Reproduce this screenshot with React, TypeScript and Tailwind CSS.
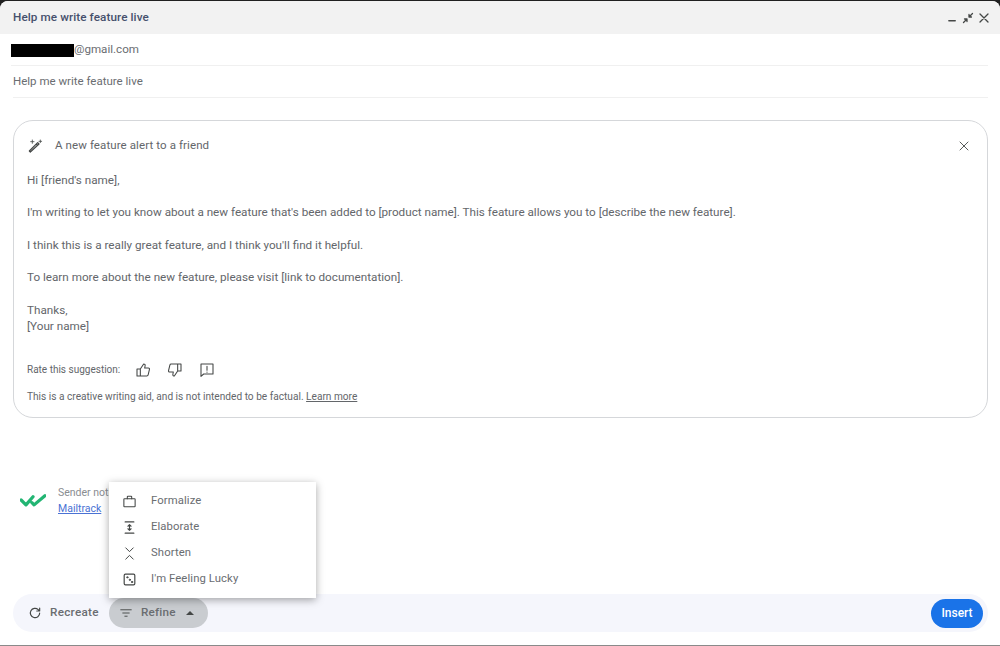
import React from 'react';

const Icon: React.FC<{ size?: number; width?: number; className?: string; children: React.ReactNode }> = ({
  size = 16,
  width = 1.3,
  className,
  children,
}) => (
  <svg
    width={size}
    height={size}
    viewBox="0 0 24 24"
    fill="none"
    stroke="currentColor"
    strokeWidth={width}
    strokeLinecap="round"
    strokeLinejoin="round"
    className={className}
  >
    {children}
  </svg>
);

const menuItems = [
  {
    label: 'Formalize',
    icon: (
      <>
        <rect x="3" y="7.5" width="18" height="13" rx="1" strokeWidth={1.7} />
        <path d="M8.5 7.5V4.500a1 1 0 0 1 1-1h5a1 1 0 0 1 1 1v3" strokeWidth={1.7} />
      </>
    ),
  },
  {
    label: 'Elaborate',
    icon: (
      <>
        <path d="M5 3h14M5 21h14" strokeWidth={1.8} />
        <path d="M12 7.5v9M9.5 10 12 7.5l2.5 2.500M9.5 14l2.5 2.5 2.5-2.5" strokeWidth={1.8} />
      </>
    ),
  },
  {
    label: 'Shorten',
    icon: <path d="M6 3l6 6 6-6M6 21l6-6 6 6" strokeWidth={1.6} />,
  },
  {
    label: "I'm Feeling Lucky",
    icon: (
      <>
        <rect x="3.5" y="3.5" width="17" height="17" rx="2" strokeWidth={1.9} />
        <circle cx="8.5" cy="8.5" r="1.1" fill="currentColor" />
        <circle cx="12.5" cy="12.5" r="1.1" fill="currentColor" />
        <circle cx="16" cy="16" r="1.1" fill="currentColor" />
      </>
    ),
  },
];

export default function App() {
  return (
    <div className="relative w-[1000px] h-[646px] overflow-hidden bg-[#202020] pt-px font-['Roboto',sans-serif] text-[#6a6d71]">
      <div className="flex flex-col h-[644px] bg-white rounded-t-lg overflow-hidden">
        <div className="flex items-center h-[33px] shrink-0 bg-[#f2f2f2] pl-[13px] pr-[10px]">
          <span className="text-[11.7px] font-medium text-[#46506c] tracking-[0.1px]">Help me write feature live</span>
          <div className="ml-auto flex items-center gap-[4px] text-[#444746]">
            <Icon size={11} width={3}>
              <path d="M4 19h14" />
            </Icon>
            <Icon size={12} width={2.6}>
              <path d="M21 3l-7 7M14 5v5h5M3 21l7-7M5 14h5v5" />
            </Icon>
            <Icon size={12} width={2.6}>
              <path d="M4 4l16 16M20 4L4 20" />
            </Icon>
          </div>
        </div>

        <div className="flex flex-col flex-1 pl-[13px] pr-[12px] min-h-0">
          <div className="flex items-center h-8 shrink-0 border-b border-[#f0f0f0] text-[11.6px] pt-px -ml-[2px]">
            <span className="w-[63px] h-[13px] bg-black" />
            <span>@gmail.com</span>
          </div>
          <div className="flex items-center h-8 shrink-0 border-b border-[#f0f0f0] text-[11.5px] pt-px">
            Help me write feature live
          </div>

          <div className="mt-[22px] h-[298px] shrink-0 flex flex-col rounded-[20px] border border-[#d5d7da] px-[13px] text-[#63666a]">
            <div className="flex items-center h-[49px] shrink-0 text-[11.5px]">
              <Icon size={16} width={1.8} className="text-[#444746]">
                <path d="M5 21l-1.500-1.500L16 7l2 2L5 21zM14 9l2 2" />
                <path d="M8 3v5M5.500 5.500h5M20 3v4M18 5h4" strokeWidth={1.2} />
              </Icon>
              <span className="ml-[12px] tracking-[0.1px]">A new feature alert to a friend</span>
              <Icon size={12} width={1.8} className="ml-auto mr-[4px] text-[#444746]">
                <path d="M4 4l16 16M20 4L4 20" />
              </Icon>
            </div>
            <div className="text-[11.7px] leading-[16.2px] pt-[2px]">
              <p>Hi [friend's name],</p>
              <p className="mt-[16.2px]">
                I'm writing to let you know about a new feature that's been added to [product name]. This feature allows
                you to [describe the new feature].
              </p>
              <p className="mt-[16.2px]">I think this is a really great feature, and I think you'll find it helpful.</p>
              <p className="mt-[16.2px]">To learn more about the new feature, please visit [link to documentation].</p>
              <p className="mt-[16.2px]">Thanks,</p>
              <p>[Your name]</p>
            </div>
            <div className="flex items-center mt-[26px] h-[20px] text-[10px]">
              <span>Rate this suggestion:</span>
              <div className="flex items-center gap-[16px] ml-[15px] text-[#444746]">
                <Icon size={16} width={1.6}>
                  <path d="M8 10.500V21H3V10.500h5zM8 10.500 13 3c1.500 0 2.500 1 2.200 2.600L14.500 9H20c1.200 0 2 1 1.700 2.200l-2 8.200c-.2 1-1 1.600-2 1.600H8" />
                </Icon>
                <Icon size={16} width={1.6}>
                  <path d="M16 13.500V3h5v10.500h-5zM16 13.500 11 21c-1.500 0-2.500-1-2.200-2.600l.7-3.400H4c-1.200 0-2-1-1.700-2.200l2-8.200C4.500 3.600 5.300 3 6.300 3H16" />
                </Icon>
                <Icon size={16} width={1.6}>
                  <path d="M3 3h18v15H7l-4 3.500V3z" />
                  <path d="M12 6.500v6M12 15v.2" />
                </Icon>
              </div>
            </div>
            <div className="mt-[9px] text-[10.15px]">
              This is a creative writing aid, and is not intended to be factual. <span className="underline">Learn more</span>
            </div>
          </div>

          <div className="flex items-start mt-[67px] pl-[7px]">
            <Icon size={26} width={3} className="mt-[2px] text-[#22b573]">
              <path d="M1 12l4.500 4.500L12 9M11 14.500l2 2L23 8" />
            </Icon>
            <div className="ml-[12px] text-[10.5px] leading-[16px] text-[#8a8d91]">
              <div>Sender notified by</div>
              <div className="text-[#4a72d4] underline">Mailtrack</div>
            </div>
          </div>

          <div className="mt-auto mb-[13px] flex items-center h-[38px] shrink-0 rounded-[19px] bg-[#f5f6fc] pl-[15px] pr-[5px]">
            <Icon size={14} width={2} className="text-[#444746]">
              <path d="M20 12a8 8 0 1 1-2.500-5.800L20 8.500M20 3.500v5h-5" />
            </Icon>
            <span className="ml-[8px] w-[51px] text-[11.7px] font-medium tracking-[0.3px]">Recreate</span>
            <div className="ml-[8px] flex items-center h-[30px] w-[99px] rounded-[15px] bg-[#c9ccd0] pl-[10px]">
              <Icon size={14} width={1.6} className="text-[#444746]">
                <path d="M3 6.500h18M6.500 12h11M10 17.500h4" />
              </Icon>
              <span className="ml-[8px] w-[34px] text-[11.7px] font-medium tracking-[0.2px]">Refine</span>
              <span className="ml-[11px] w-0 h-0 border-x-[4px] border-x-transparent border-b-[4px] border-b-[#444746]" />
            </div>
            <button className="ml-auto h-[29px] w-[52px] rounded-[15px] bg-[#1a73e8] text-white text-[12px] font-medium">
              Insert
            </button>
          </div>
        </div>
      </div>

      <div className="absolute left-[109px] top-[482px] w-[207px] h-[116px] bg-white pt-[6px] shadow-[0_2px_8px_rgba(0,0,0,0.35)]">
        {menuItems.map((item) => (
          <div key={item.label} className="flex items-center h-[26px] pl-[13px] text-[11.3px] tracking-[0.1px]">
            <Icon size={15} className="text-[#444746]">
              {item.icon}
            </Icon>
            <span className="ml-[14px] pt-px">{item.label}</span>
          </div>
        ))}
      </div>
      <div className="absolute left-0 bottom-0 w-full h-px bg-[#8a8a8a]" />
    </div>
  );
}
